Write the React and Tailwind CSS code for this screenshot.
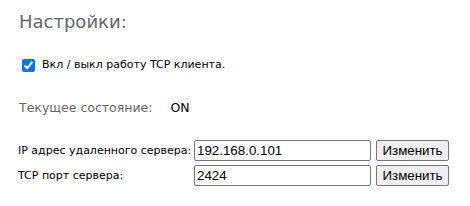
export default function App() {
  return (
    <div className="w-[470px] h-[206px] bg-white pl-[18px] pt-[10px] font-['DejaVu_Sans',sans-serif]">
      <h1 className="text-[18px] leading-[24px] text-[#666] pl-[1px]">Настройки:</h1>

      <label className="mt-[23px] ml-[4px] flex items-center gap-[7px] text-[11px] text-black">
        <input type="checkbox" defaultChecked className="w-[13px] h-[13px] m-0 accent-[#0075ff]" />
        <span>Вкл / выкл работу TCP клиента.</span>
      </label>

      <div className="mt-[25px] flex items-center text-[12.5px] text-[#666] pl-[1px]">
        <span>Текущее состояние:</span>
        <span className="ml-[18px] text-black">ON</span>
      </div>

      <div className="mt-[23px] flex flex-col gap-[4px] text-[11px] text-black">
        <div className="flex items-center">
          <span className="w-[176px]">IP адрес удаленного сервера:</span>
          <input
            defaultValue="192.168.0.101"
            className="w-[177px] h-[21px] border border-[#767676] rounded-[2px] px-[2px] text-[13.33px] font-['Liberation_Sans',sans-serif] text-black"
          />
          <button className="ml-[5px] w-[73px] h-[21px] border border-[#767676] rounded-[2px] bg-[#efefef] text-[13.33px] font-['Liberation_Sans',sans-serif] text-black">
            Изменить
          </button>
        </div>
        <div className="flex items-center">
          <span className="w-[176px]">TCP порт сервера:</span>
          <input
            defaultValue="2424"
            className="w-[177px] h-[21px] border border-[#767676] rounded-[2px] px-[2px] text-[13.33px] font-['Liberation_Sans',sans-serif] text-black"
          />
          <button className="ml-[5px] w-[73px] h-[21px] border border-[#767676] rounded-[2px] bg-[#efefef] text-[13.33px] font-['Liberation_Sans',sans-serif] text-black">
            Изменить
          </button>
        </div>
      </div>
    </div>
  );
}
